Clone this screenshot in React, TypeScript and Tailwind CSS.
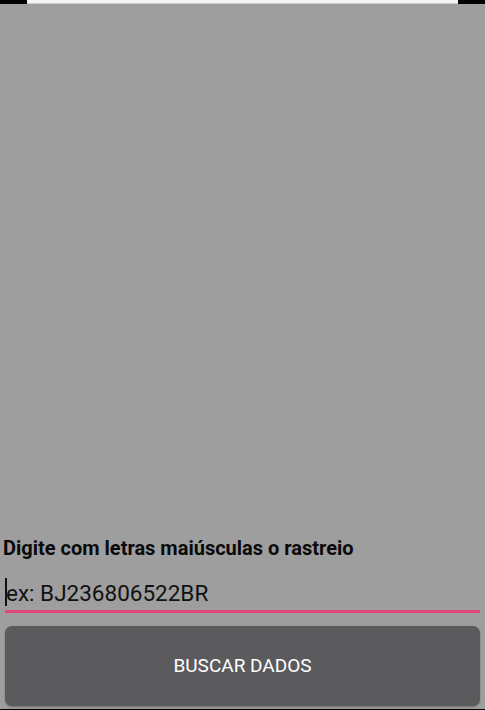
import React from "react";

export default function App() {
  return (
    <div className="w-[485px] h-[710px] bg-[#9e9e9e] flex flex-col overflow-hidden" style={{ fontFamily: "Roboto, 'Liberation Sans', sans-serif" }}>
      <div className="h-[4px] flex shrink-0">
        <div className="w-[27px] bg-black" />
        <div className="flex-1 bg-[#f4f4f4] border-b border-[#cfcfcf]" />
        <div className="w-[27px] bg-black" />
      </div>
      <div className="flex-1" />
      <div className="px-[3px] text-[20px] font-bold leading-[24px] text-[#0a0a0a]">
        Digite com letras maiúsculas o rastreio
      </div>
      <div className="mt-[16px] mx-[5px] relative h-[37px] border-b-[3px] border-[#e2457c] flex items-center">
        <div className="absolute left-0 top-[2px] w-[2px] h-[28px] bg-[#111]" />
        <span className="text-[22.5px] leading-[28px] text-[#111] pl-[1px]">ex: BJ236806522BR</span>
      </div>
      <button className="mt-[13px] mx-[5px] h-[80px] rounded-[7px] bg-[#5b5b5d] text-white text-[19px] shadow-[0_1px_2px_rgba(0,0,0,0.3)]">
        BUSCAR DADOS
      </button>
      <div className="h-[3px] shrink-0" />
      <div className="h-[1px] bg-black shrink-0" />
    </div>
  );
}
